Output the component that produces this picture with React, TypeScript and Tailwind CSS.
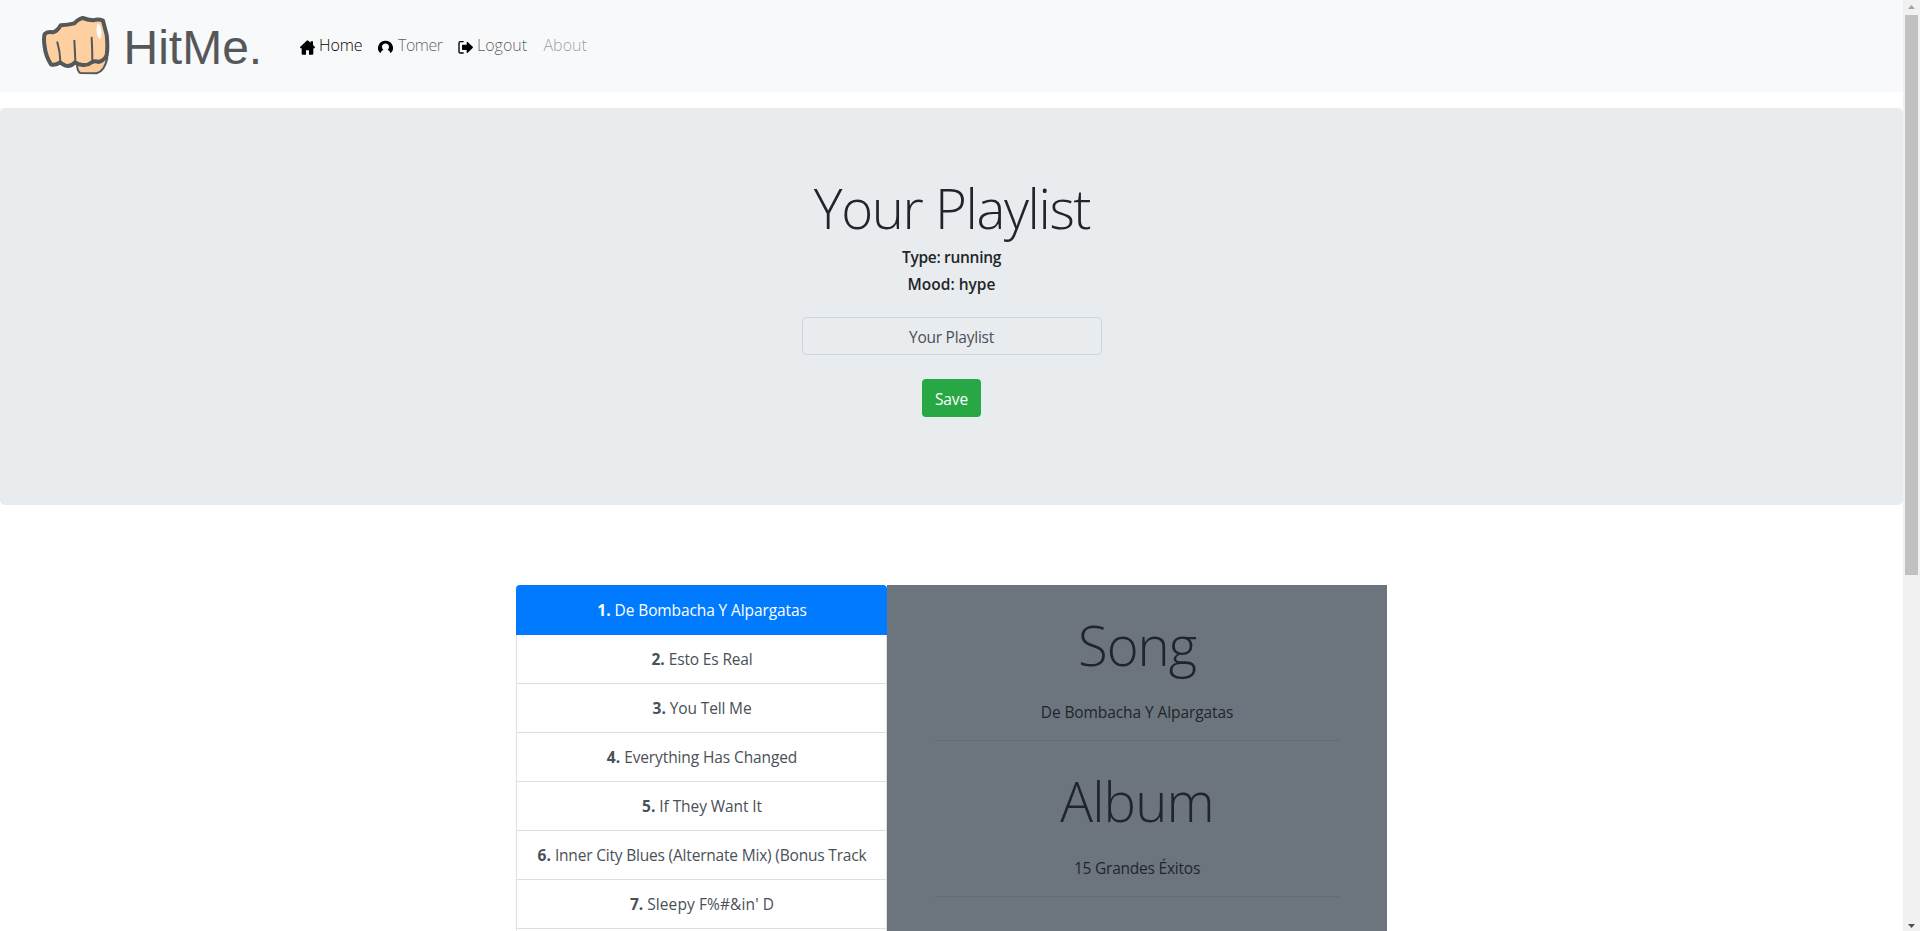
const songs = [
  { title: 'De Bombacha Y Alpargatas', tracking: 'tracking-[-0.11px]' },
  { title: 'Esto Es Real', tracking: 'tracking-[-0.15px]' },
  { title: 'You Tell Me', tracking: 'tracking-[-0.15px]' },
  { title: 'Everything Has Changed', tracking: 'tracking-[-0.11px]' },
  { title: 'If They Want It', tracking: 'tracking-[-0.09px]' },
  { title: 'Inner City Blues (Alternate Mix) (Bonus Track', tracking: 'tracking-[-0.19px]' },
  { title: "Sleepy F%#&in' D", tracking: 'tracking-[0.1px]' },
];

function Fist() {
  return (
    <svg viewBox="0 0 270 225" className="h-[75px] w-[90px] shrink-0" fill="none" strokeLinecap="round" strokeLinejoin="round">
      <path
        d="M141 172 Q143 192 151 195 L200 196 Q224 189 232 150 L200 150 Z"
        fill="#fbcb9c" stroke="#555859" strokeWidth="6"
      />
      <path
        d="M44 78 Q54 70 69 73 Q82 70 92 52 Q114 50 133 46 Q146 32 158 30 Q175 36 190 37 Q206 32 219 38 Q224 58 230 80 Q234 115 230 142 Q222 158 205 162 Q195 158 187 162 Q173 173 158 171 Q145 170 135 163 Q122 177 107 173 Q97 169 90 163 Q75 174 63 169 Q47 144 44 116 Q40 92 44 78 Z"
        fill="#fdcfa1" stroke="#555859" strokeWidth="12"
      />
      <path d="M82 103 Q90 130 91 160 M133 98 Q135 130 136 160 M185 89 Q187 125 187 158" stroke="#555859" strokeWidth="6" />
      <ellipse cx="207" cy="70" rx="7" ry="22" fill="#fff" transform="rotate(-6 207 70)" />
    </svg>
  );
}

function HomeIcon() {
  return (
    <svg viewBox="0 0 45 45" className="h-[15px] w-[15px]">
      <path d="M20 2 Q22.500 0 25 2 L32 8 V4 H39 V15 L44 20 Q46 24 43 25 H40 V41 Q40 44 37 44 H27 V31 H18 V44 H8 Q5 44 5 41 V25 H2 Q-1 24 1 20 Z" />
    </svg>
  );
}

function UserIcon() {
  return (
    <svg viewBox="0 0 45 45" className="h-[15px] w-[15px]">
      <path
        fillRule="evenodd"
        d="M22.500 2 A22 22 0 0 1 38 40 Q36 32 29 29 A10.500 10.500 0 1 0 16 29 Q9 32 7 40 A22 22 0 0 1 22.500 2 Z"
      />
    </svg>
  );
}

function LogoutIcon() {
  return (
    <svg viewBox="0 0 45 45" className="h-[15px] w-[15px]">
      <path d="M17 5 H7 Q3 5 3 9 V35 Q3 39 7 39 H17" fill="none" stroke="#000" strokeWidth="4" />
      <path d="M12 16 Q12 14 14 14 H26 V7 Q26 4 29 6 L44 20 Q46 22 44 24 L29 38 Q26 40 26 37 V30 H14 Q12 30 12 28 Z" />
    </svg>
  );
}

function Navbar() {
  return (
    <nav className="flex h-[92px] bg-[#f8f9fa]">
      <a className="flex w-[270px] pt-2 pl-[30px]">
        <Fist />
        <span className="pt-[2px] pl-[3.5px] font-['Liberation_Sans',sans-serif] text-[48px] leading-[76px] text-[#55585b]">HitMe.</span>
      </a>
      <ul className="flex pt-[33px] pl-[30px] font-light leading-6">
        <li className="flex w-[78px] text-black">
          <span className="w-[19px] pt-[7px]"><HomeIcon /></span>
          <span className="font-[350] tracking-[-0.1px]">Home</span>
        </li>
        <li className="flex w-[80px] text-black/65">
          <span className="w-5 pt-[7px]"><UserIcon /></span>
          <span className="tracking-[-0.5px]">Tomer</span>
        </li>
        <li className="flex w-[85.5px] text-black/65">
          <span className="w-[19px] pt-[7px]"><LogoutIcon /></span>
          <span>Logout</span>
        </li>
        <li className="text-black/40">About</li>
      </ul>
    </nav>
  );
}

function Jumbotron() {
  return (
    <header className="mt-4 flex h-[397px] flex-col items-center rounded-[5px] bg-[#e9ecef] pt-16">
      <h1 className="mt-[3px] h-[67px] pl-px text-[54.5px] leading-[67px] font-light tracking-[-1.4px]">Your Playlist</h1>
      <div className="mt-[2px] text-[15.5px] leading-[27px] font-semibold">
        <p className="text-center tracking-[-0.3px]">Type: running</p>
        <p className="text-center">Mood: hype</p>
      </div>
      <div className="mt-[19px] flex h-[38px] w-[300px] items-center justify-center rounded-[4px] border border-[#ced4da] pt-[2px] text-[15.5px] leading-6 tracking-[-0.25px] text-[#495057]">
        Your Playlist
      </div>
      <button className="mt-6 h-[38px] w-[59px] rounded-[4px] bg-[#28a745] pt-px text-[15.5px] leading-6 tracking-[-0.1px] text-white">Save</button>
    </header>
  );
}

function SongList() {
  return (
    <ul className="w-[371px] text-center text-[15.5px] text-[#495057]">
      {songs.map((song, i) => (
        <li
          key={song.title}
          className={
            i === 0
              ? 'h-[50px] rounded-t-[4px] bg-[#007bff] pt-[13px] pl-px leading-6 whitespace-nowrap text-white'
              : 'h-[49px] border-x border-b border-[#dfdfdf] bg-white pt-3 pl-px leading-6 font-[370] whitespace-nowrap'
          }
        >
          <b>{i + 1}.</b> <span className={song.tracking}>{song.title}</span>
        </li>
      ))}
      <li className="h-[49px] border-x border-[#dfdfdf]" />
    </ul>
  );
}

function Details() {
  return (
    <section className="w-[500px] bg-[#6c757d] px-12 text-center">
      <h2 className="pt-[27px] text-[54.5px] leading-[67px] font-light tracking-[-1px]">Song</h2>
      <p className="mt-[21px] text-[15.5px] leading-6 font-[370] tracking-[-0.09px]">De Bombacha Y Alpargatas</p>
      <hr className="mt-4 border-[#626a72]" />
      <h2 className="pt-[27px] text-[54.5px] leading-[67px] font-light tracking-[-0.9px]">Album</h2>
      <p className="mt-[21px] text-[15.5px] leading-6 font-[370] tracking-[-0.22px]">15 Grandes Éxitos</p>
      <hr className="mt-4 border-[#626a72]" />
    </section>
  );
}

function Scrollbar() {
  return (
    <div className="flex w-[17px] flex-col items-center bg-[#f1f1f1]">
      <svg viewBox="0 0 17 15" className="h-[15px] w-[17px] shrink-0"><path d="M5 9 H12 L8.500 5 Z" fill="#a3a3a3" /></svg>
      <div className="h-[560px] w-[13px] bg-[#c1c1c1]" />
      <svg viewBox="0 0 17 15" className="mt-auto h-[15px] w-[17px] shrink-0"><path d="M5 8 H12 L8.500 12 Z" fill="#505050" /></svg>
    </div>
  );
}

export default function App() {
  return (
    <div className="flex h-[931px] overflow-hidden bg-white font-['Open_Sans','Noto_Sans',sans-serif] text-base text-[#212529]">
      <div className="w-[1903px] overflow-hidden">
        <Navbar />
        <Jumbotron />
        <main className="mt-20 flex h-[346px] overflow-hidden pl-[516px]">
          <SongList />
          <Details />
        </main>
      </div>
      <Scrollbar />
    </div>
  );
}
